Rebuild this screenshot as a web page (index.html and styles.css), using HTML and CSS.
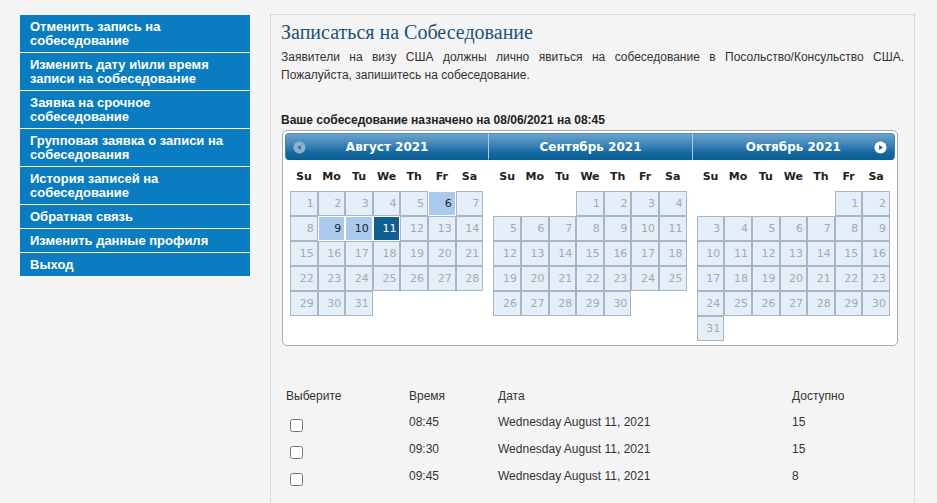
FILE: index.html
```html
<!DOCTYPE html>
<html lang="ru">
<head>
<meta charset="utf-8">
<title>Записаться на Собеседование</title>
<link rel="stylesheet" href="styles.css">
</head>
<body>
<div class="page">
  <ul class="sidebar">
    <li><a href="#">Отменить запись на собеседование</a></li>
    <li><a href="#">Изменить дату и\или время записи на собеседование</a></li>
    <li><a href="#">Заявка на срочное собеседование</a></li>
    <li><a href="#">Групповая заявка о записи на собеседования</a></li>
    <li><a href="#">История записей на собеседование</a></li>
    <li><a href="#">Обратная связь</a></li>
    <li><a href="#">Изменить данные профиля</a></li>
    <li><a href="#">Выход</a></li>
  </ul>
  <div class="panel">
    <h1 class="title">Записаться на Собеседование</h1>
    <p class="intro">Заявители на визу США должны лично явиться на собеседование в Посольство/Консульство США. Пожалуйста, запишитесь на собеседование.</p>
    <p class="appt">Ваше собеседование назначено на 08/06/2021 на 08:45</p>

    <div class="datepicker">
      <div class="group">
        <div class="dp-header first">
          <svg class="nav prev" width="13" height="13" viewBox="0 0 13 13"><circle cx="6.5" cy="6.5" r="6" fill="#8fb1cc"/><path d="M4.2 6.5 L7.8 4 L7.8 9 Z" fill="#3d6f96"/></svg>
          <span>Август 2021</span>
        </div>
        <div class="dow"><span>Su</span><span>Mo</span><span>Tu</span><span>We</span><span>Th</span><span>Fr</span><span>Sa</span></div>
        <div class="days">
          <span class="d">1</span><span class="d">2</span><span class="d">3</span><span class="d">4</span><span class="d">5</span><span class="d on">6</span><span class="d">7</span>
          <span class="d">8</span><span class="d on">9</span><span class="d on">10</span><span class="d sel">11</span><span class="d">12</span><span class="d">13</span><span class="d">14</span>
          <span class="d">15</span><span class="d">16</span><span class="d">17</span><span class="d">18</span><span class="d">19</span><span class="d">20</span><span class="d">21</span>
          <span class="d">22</span><span class="d">23</span><span class="d">24</span><span class="d">25</span><span class="d">26</span><span class="d">27</span><span class="d">28</span>
          <span class="d">29</span><span class="d">30</span><span class="d">31</span>
        </div>
      </div>
      <div class="group">
        <div class="dp-header mid">
          <span>Сентябрь 2021</span>
        </div>
        <div class="dow"><span>Su</span><span>Mo</span><span>Tu</span><span>We</span><span>Th</span><span>Fr</span><span>Sa</span></div>
        <div class="days">
          <span class="e"></span><span class="e"></span><span class="e"></span><span class="d">1</span><span class="d">2</span><span class="d">3</span><span class="d">4</span>
          <span class="d">5</span><span class="d">6</span><span class="d">7</span><span class="d">8</span><span class="d">9</span><span class="d">10</span><span class="d">11</span>
          <span class="d">12</span><span class="d">13</span><span class="d">14</span><span class="d">15</span><span class="d">16</span><span class="d">17</span><span class="d">18</span>
          <span class="d">19</span><span class="d">20</span><span class="d">21</span><span class="d">22</span><span class="d">23</span><span class="d">24</span><span class="d">25</span>
          <span class="d">26</span><span class="d">27</span><span class="d">28</span><span class="d">29</span><span class="d">30</span>
        </div>
      </div>
      <div class="group">
        <div class="dp-header last">
          <span>Октябрь 2021</span>
          <svg class="nav next" width="13" height="13" viewBox="0 0 13 13"><circle cx="6.5" cy="6.5" r="6" fill="#ffffff"/><path d="M8.8 6.5 L5.2 4 L5.2 9 Z" fill="#1d557f"/></svg>
        </div>
        <div class="dow"><span>Su</span><span>Mo</span><span>Tu</span><span>We</span><span>Th</span><span>Fr</span><span>Sa</span></div>
        <div class="days">
          <span class="e"></span><span class="e"></span><span class="e"></span><span class="e"></span><span class="e"></span><span class="d">1</span><span class="d">2</span>
          <span class="d">3</span><span class="d">4</span><span class="d">5</span><span class="d">6</span><span class="d">7</span><span class="d">8</span><span class="d">9</span>
          <span class="d">10</span><span class="d">11</span><span class="d">12</span><span class="d">13</span><span class="d">14</span><span class="d">15</span><span class="d">16</span>
          <span class="d">17</span><span class="d">18</span><span class="d">19</span><span class="d">20</span><span class="d">21</span><span class="d">22</span><span class="d">23</span>
          <span class="d">24</span><span class="d">25</span><span class="d">26</span><span class="d">27</span><span class="d">28</span><span class="d">29</span><span class="d">30</span>
          <span class="d">31</span>
        </div>
      </div>
    </div>

    <table class="slots">
      <colgroup><col class="c1"><col class="c2"><col class="c3"><col class="c4"></colgroup>
      <thead>
        <tr class="head"><th>Выберите</th><th>Время</th><th>Дата</th><th>Доступно</th></tr>
      </thead>
      <tbody>
        <tr class="row"><td class="chk"><input type="checkbox"></td><td>08:45</td><td>Wednesday August 11, 2021</td><td>15</td></tr>
        <tr class="row"><td class="chk"><input type="checkbox"></td><td>09:30</td><td>Wednesday August 11, 2021</td><td>15</td></tr>
        <tr class="row"><td class="chk"><input type="checkbox"></td><td>09:45</td><td>Wednesday August 11, 2021</td><td>8</td></tr>
      </tbody>
    </table>
  </div>
</div>
</body>
</html>
```
FILE: styles.css
```css
* { box-sizing: border-box; }
html, body { margin: 0; padding: 0; }
body {
  background: #f4f4f4;
  font-family: "Liberation Sans", Arial, sans-serif;
  font-size: 12px;
  color: #333;
  overflow: hidden;
}
.page {
  display: flex;
  align-items: flex-start;
  gap: 20px;
  padding: 14px 0 0 20px;
}
.sidebar {
  list-style: none;
  margin: 1px 0 0;
  padding: 0;
  width: 230px;
  flex: none;
}
.sidebar a {
  display: block;
  background: #0a7cc1;
  color: #fff;
  font: bold 13px/14px "Liberation Sans", Arial, sans-serif;
  padding: 5px 10px 4px;
  border-bottom: 1px solid #fff;
  text-decoration: none;
}
.sidebar li:last-child a { border-bottom: 0; }

.panel {
  width: 645px;
  flex: none;
  border: 1px dotted #c2c2c2;
  padding: 5px 10px 0;
  min-height: 520px;
}
.title {
  margin: 0;
  font: normal 20px/24px "Liberation Serif", "Times New Roman", serif;
  color: #1f5276;
}
.intro {
  margin: 4px 0 0;
  line-height: 18px;
  text-align: justify;
  color: #333;
}
.appt {
  margin: 27px 0 0;
  line-height: 18px;
  font-weight: bold;
  color: #222;
}

.datepicker {
  margin: 1px 0 0 1px;
  width: 616px;
  border: 1px solid #aaa;
  border-radius: 5px;
  background: #fff;
  padding: 2px 2px 2px;
  display: flex;
  align-items: flex-start;
  font-family: "DejaVu Sans", Verdana, sans-serif;
}
.group { flex: 1 1 0; min-width: 0; }
.dp-header {
  height: 27px;
  display: flex;
  align-items: center;
  justify-content: center;
  position: relative;
  background: linear-gradient(to bottom, #6ba3cc 0%, #3a83b6 45%, #1469a0 75%, #0b5f95 100%);
  color: #fff;
  font-weight: bold;
  font-size: 12px;
  border-top: 1px solid #4a8dbd;
  border-bottom: 1px solid #0d5a8c;
}
.dp-header.first { border-radius: 4px 0 0 4px; border-left: 1px solid #3c82b3; }
.dp-header.mid { border-left: 1px solid #a9cbe4; }
.dp-header.last { border-radius: 0 4px 4px 0; border-left: 1px solid #a9cbe4; border-right: 1px solid #3c82b3; }
.nav { position: absolute; top: 7px; }
.nav.prev { left: 7px; }
.nav.next { right: 7px; }

.dow {
  width: 95%;
  margin: 0 auto;
  display: grid;
  grid-template-columns: repeat(7, 1fr);
  padding: 10px 0 8px;
  font-size: 11px;
  line-height: 13px;
  font-weight: bold;
  color: #222;
  text-align: center;
}
.days {
  width: 95%;
  margin: 0 auto 2px;
  display: grid;
  grid-template-columns: repeat(7, 1fr);
  grid-auto-rows: 25px;
  font-size: 11px;
}
.d {
  border: 1px solid #a7b6c2;
  background: #e3eef9;
  color: #a9a9a9;
  text-align: right;
  padding-right: 3px;
  line-height: 23px;
}
.d.on { border-color: #fff; background: #a9c9ed; color: #222; }
.d.sel { border-color: #fff; background: #0e5e92; color: #fff; }

.slots {
  margin: 40px 0 0 1px;
  width: 616px;
  border-collapse: collapse;
  table-layout: fixed;
}
.c1 { width: 123px; }
.c2 { width: 89px; }
.c3 { width: 294px; }
.slots th, .slots td {
  padding: 3px 0 0 4px;
  text-align: left;
  vertical-align: top;
  font-weight: normal;
  line-height: 14px;
  color: #333;
}
.slots tr.head { height: 26px; }
.slots tr.row { height: 27px; }
.slots td.chk { padding: 0; }
.slots input {
  display: block;
  margin: 7px 0 0 8px;
  width: 13px;
  height: 13px;
}
```
